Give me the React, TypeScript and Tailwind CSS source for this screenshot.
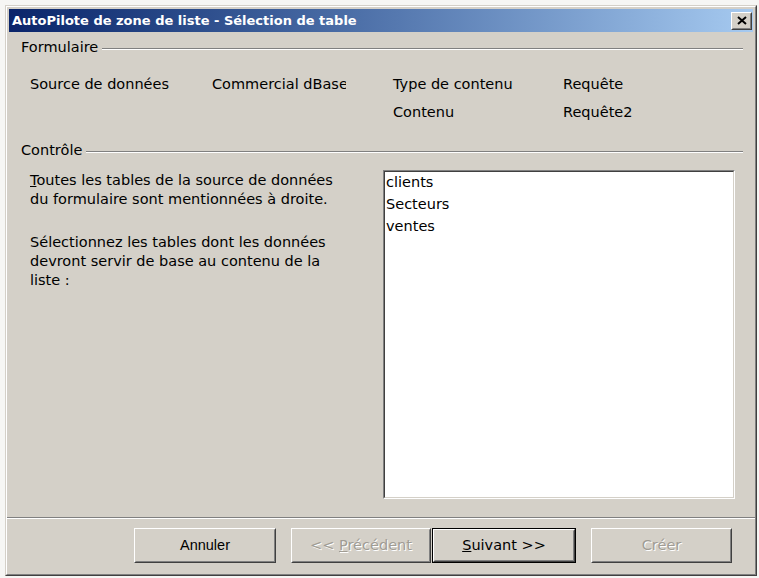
import React from "react";

const font = { fontFamily: '"DejaVu Sans", Verdana, sans-serif' };

function GroupHeader({ label }: { label: string }) {
  return (
    <div className="flex h-[30px] items-center pl-[14px] pr-[12px]">
      <span className="text-[14.5px] leading-none text-black">{label}</span>
      <div className="ml-[4px] mt-[4px] flex-1 border-t border-b border-t-[#808080] border-b-white" />
    </div>
  );
}

function Button({
  children,
  width,
  disabled,
  isDefault,
  sans,
}: {
  children: React.ReactNode;
  width: string;
  disabled?: boolean;
  isDefault?: boolean;
  sans?: boolean;
}) {
  return (
    <div className={`${width} h-[35px] ${isDefault ? "border border-black" : ""}`}>
      <div
        className={`flex h-full items-center justify-center border border-t-white border-l-white border-r-[#404040] border-b-[#404040] ${
          disabled ? "text-[#a09c94]" : "text-black"
        }`}
        style={sans ? { fontFamily: '"Liberation Sans", Arial, sans-serif' } : undefined}
      >
        <div className="flex h-full w-full items-center justify-center border border-t-[#d4d0c8] border-l-[#d4d0c8] border-r-[#808080] border-b-[#808080] text-[14.5px]">
          <span style={disabled ? { textShadow: "1px 1px 0 #fff" } : undefined}>{children}</span>
        </div>
      </div>
    </div>
  );
}

export default function App() {
  return (
    <div className="h-[578px] w-[759px] bg-[#f6f6f4] pl-[5px] pt-[5px]" style={font}>
      <div className="h-[571px] w-[752px] border border-t-[#d4d0c8] border-l-[#d4d0c8] border-r-[#404040] border-b-[#404040] bg-[#d4d0c8]">
        <div className="flex h-full flex-col border border-t-white border-l-white border-r-[#808080] border-b-[#808080]">
          {/* title bar */}
          <div className="px-[2px] pt-[2px]">
            <div className="flex h-[23px] items-center justify-between bg-gradient-to-r from-[#0a246a] to-[#a6caf0] pl-[3px] pr-[1px]">
              <span className="text-[13px] font-bold text-white">
                AutoPilote de zone de liste - Sélection de table
              </span>
              <div className="h-[18px] w-[21px] border border-t-white border-l-white border-r-[#404040] border-b-[#404040] bg-[#d4d0c8]">
                <div className="flex h-full w-full items-center justify-center border border-t-[#d4d0c8] border-l-[#d4d0c8] border-r-[#808080] border-b-[#808080]">
                  <svg width="10" height="9" viewBox="0 0 10 9">
                    <path d="M1 1 L9 8 M9 1 L1 8" stroke="#000" strokeWidth="2" />
                  </svg>
                </div>
              </div>
            </div>
          </div>

          {/* Formulaire */}
          <GroupHeader label="Formulaire" />
          <div className="mt-[9px] pl-[23px] text-[14.5px] text-black">
            <div className="flex h-[28px] items-center">
              <div className="w-[182px]">Source de données</div>
              <div className="w-[134px] overflow-hidden whitespace-nowrap">Commercial dBase</div>
              <div className="ml-[47px] w-[170px]">Type de contenu</div>
              <div>Requête</div>
            </div>
            <div className="flex h-[28px] items-center">
              <div className="ml-[363px] w-[170px]">Contenu</div>
              <div>Requête2</div>
            </div>
          </div>

          {/* Contrôle */}
          <div className="mt-[8px]">
            <GroupHeader label="Contrôle" />
          </div>
          <div className="mt-[5px] flex pl-[23px]">
            <div className="w-[353px] pt-[1px] text-[14.5px] leading-[19px] text-black">
              <p className="w-[325px]">
                <span className="underline">T</span>outes les tables de la source de données du formulaire sont mentionnées à droite.
              </p>
              <p className="mt-[24px] w-[325px]">
                Sélectionnez les tables dont les données devront servir de base au contenu de la liste :
              </p>
            </div>
            <div className="h-[329px] w-[352px] border border-t-[#808080] border-l-[#808080] border-r-white border-b-white">
              <div className="h-full w-full border border-t-[#404040] border-l-[#404040] border-r-[#d4d0c8] border-b-[#d4d0c8] bg-white pl-[1px] text-[14.5px] text-black">
                <div className="flex h-[22px] items-center">clients</div>
                <div className="flex h-[22px] items-center">Secteurs</div>
                <div className="flex h-[22px] items-center">ventes</div>
              </div>
            </div>
          </div>

          {/* bottom */}
          <div className="mt-[18px] border-t border-b border-t-[#808080] border-b-white" />
          <div className="mt-[9px] flex pl-[127px]">
            <Button width="w-[142px]" sans>
              Annuler
            </Button>
            <div className="ml-[15px]">
              <Button width="w-[140px]" disabled>
                &lt;&lt; <span className="underline">P</span>récédent
              </Button>
            </div>
            <div className="ml-[1px]">
              <Button width="w-[144px]" isDefault>
                <span className="underline">S</span>uivant &gt;&gt;
              </Button>
            </div>
            <div className="ml-[15px]">
              <Button width="w-[141px]" disabled>
                Créer
              </Button>
            </div>
          </div>
        </div>
      </div>
    </div>
  );
}
